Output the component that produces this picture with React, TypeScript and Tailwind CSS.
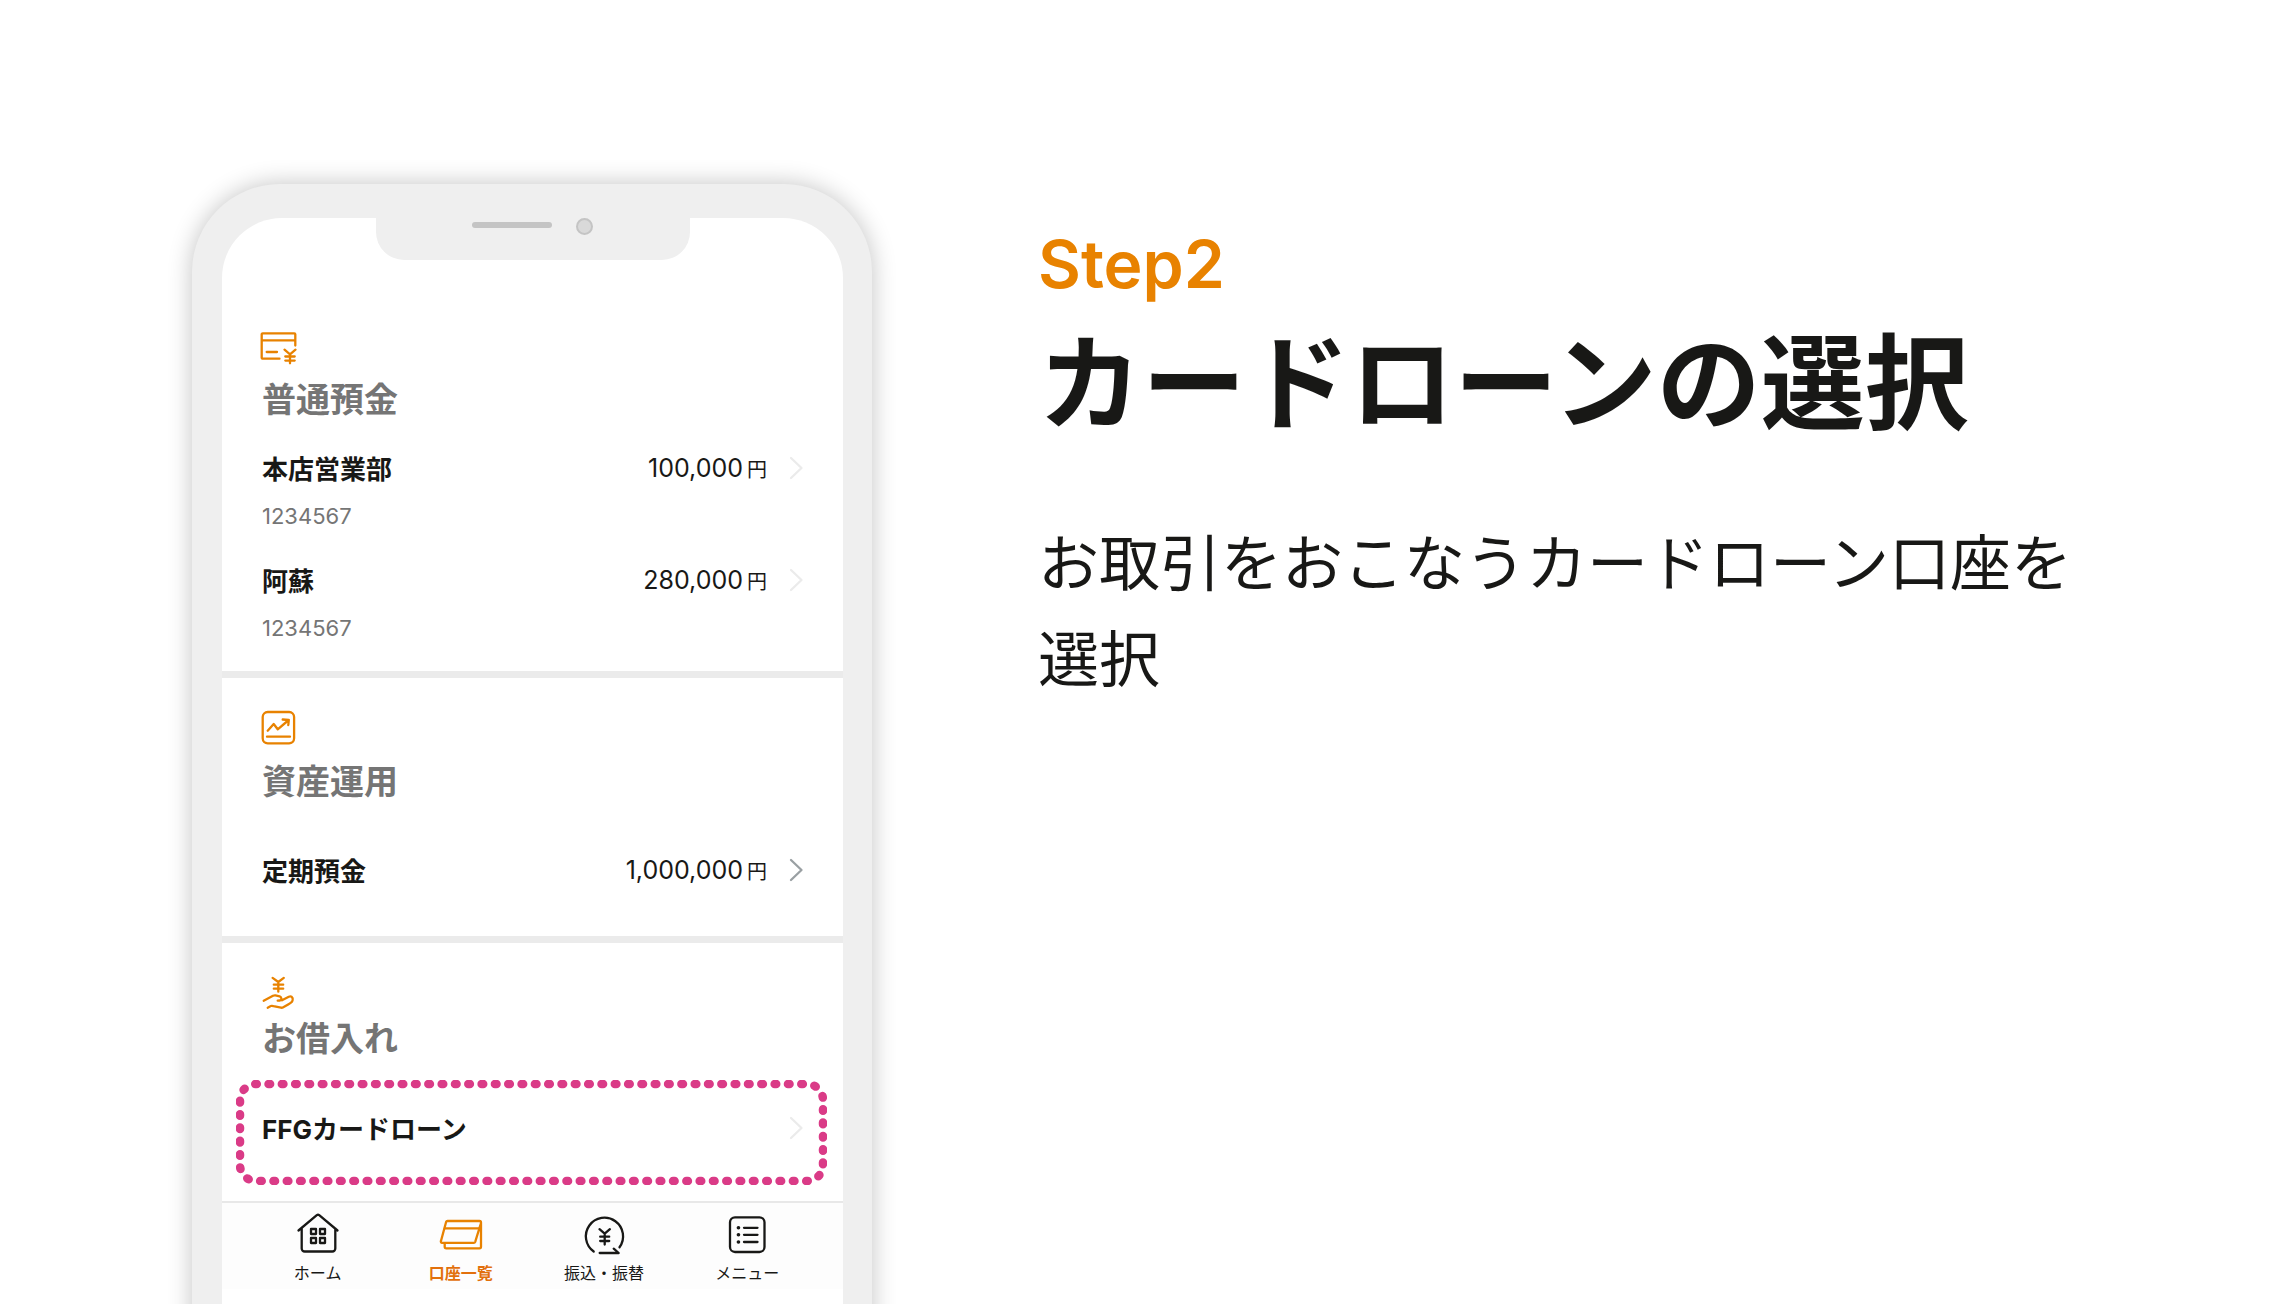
import type { ReactNode } from "react";

const jp = "font-['Inter','Noto_Sans_CJK_JP',sans-serif]";

type SvgProps = { className: string; viewBox: string; children: ReactNode };

function Svg({ className, viewBox, children }: SvgProps) {
  return (
    <svg
      className={`overflow-visible ${className}`}
      viewBox={viewBox}
      fill="none"
      stroke="currentColor"
      strokeWidth="2.300"
      strokeLinecap="round"
      strokeLinejoin="round"
      aria-hidden="true"
    >
      {children}
    </svg>
  );
}

function CardYenIcon() {
  return (
    <Svg className="h-8 w-9" viewBox="0 0 36 32">
      <path d="M19.500 26.700H2.700a1 1 0 0 1-1-1V2.300a1 1 0 0 1 1-1h31.600a1 1 0 0 1 1 1V13.500M1.700 8.300h33.600M6.700 20h10.300" />
      <path d="M24.500 17.700L30 22.300l5.500-4.600M30 22.300v9M25.300 24.500h9.400M25.300 28.600h9.400" />
    </Svg>
  );
}

function ChartIcon() {
  return (
    <Svg className="size-9" viewBox="0 0 36 36">
      <rect x="2.700" y="2" width="31.400" height="31.300" rx="5" />
      <path d="M7.700 20.700l6-6.700 4 5.300L28.700 10M22.700 9.500l6.100.5-.5 5M7 26.700h23" />
    </Svg>
  );
}

function HandYenIcon() {
  return (
    <Svg className="h-8 w-9" viewBox="0 0 36 32">
      <path d="M12.600 2.900l5.700 4.100 5.500-4.100M18.300 7v9.700M13.800 9.700h9.400M13.800 13.700h9.400" />
      <path d="M3.700 25.700l9.300-4.900c.9-.4 1.600-.6 2.400-.4l4.300 1c1 .3 1.600 1.200 1.700 2.200.1 1-.5 1.700-1.400 1.900l-2.300.1M22 25.200l6.800-3.500c1.500-.6 3-.2 3.600 1 .6 1.300.2 3.700-1.100 4.700-2.400 1.900-5.800 3.700-8.400 5.100-.6.300-1.200.3-1.900.2l-7.500-1.600c-1.200-.3-1.900-.5-2.700 0l-3.100 1.600" />
    </Svg>
  );
}

function Chevron({ className }: { className: string }) {
  return (
    <Svg className={`h-6 w-3.5 shrink-0 ${className}`} viewBox="0 0 14 24">
      <path d="M2 2l10.500 10L2 22" />
    </Svg>
  );
}

type RowProps = { name: string; number?: string; amount?: string; chevron?: string };

function AccountRow({ name, number, amount, chevron = "text-[#ebebeb]" }: RowProps) {
  return (
    <a href="#account" className="block">
      <div className="flex h-10 items-center">
        <span className="flex-1 pt-0.5 text-[26px] font-bold">{name}</span>
        {amount && (
          <span className="mr-5.5 pt-0.5 text-[25px]">
            {amount}
            <span className="ml-1 text-xl">円</span>
          </span>
        )}
        <Chevron className={chevron} />
      </div>
      {number && <p className="mt-2 text-[22px] leading-10 text-[#757575]">{number}</p>}
    </a>
  );
}

function SectionTitle({ children }: { children: ReactNode }) {
  return <h2 className="text-[34px] leading-12 font-bold text-[#757575]">{children}</h2>;
}

function SectionIcon({ children }: { children: ReactNode }) {
  return <div className="-ml-0.5 flex text-[#e88200]">{children}</div>;
}

const tabs = [
  {
    label: "ホーム",
    icon: (
      <>
        <path d="M1.500 19.500L19.800 4.200a2 2 0 0 1 2.400 0L40.500 19.500M4.700 17.500v20a3 3 0 0 0 3 3h27.600a3 3 0 0 0 3-3v-20" />
        <path d="M14 18h5v5h-5zM23 18h5v5h-5zM14 27h5v5h-5zM23 27h5v5h-5z" />
      </>
    ),
  },
  {
    label: "口座一覧",
    active: true,
    icon: (
      <>
        <path d="M4.700 32.300v3.500a1.500 1.500 0 0 0 1.500 1.500h33.300a1.500 1.500 0 0 0 1.500-1.500V11.500a1.500 1.500 0 0 0-1.500-1.500H7.500a1.500 1.500 0 0 0-1.400 1L.9 30.200a1.200 1.200 0 0 0 1.100 1.600h31.800a1.500 1.500 0 0 0 1.400-1L40.700 13" />
        <path d="M4.800 17.300h34.200" />
      </>
    ),
  },
  {
    label: "振込・振替",
    icon: (
      <>
        <path d="M10.700 40.500A18.600 18.600 0 1 1 36.500 36.300" />
        <path d="M16.700 42h19l-5-4.300" />
        <path d="M16.500 18.200l5.200 4.500 5.200-4.500M21.700 22.700v10.800M17.200 25.700h9M17.200 30h9" />
      </>
    ),
  },
  {
    label: "メニュー",
    icon: (
      <>
        <rect x="4" y="6.300" width="34.500" height="34.700" rx="5" />
        <path d="M18 16.800h13.500M18 23.800h13.500M18 31h13.500" />
        <path d="M12.400 16.800h.1M12.400 23.800h.1M12.400 31h.1" strokeWidth="3.600" />
      </>
    ),
  },
];

function TabBar() {
  return (
    <nav className="grid grid-cols-4 border-t-2 border-[#e8e8e8] bg-[#fdfdfd] px-6 pt-2 pb-1">
      {tabs.map((tab) => (
        <a key={tab.label} href="#tab" className="flex flex-col items-center">
          <Svg className={tab.active ? "size-[42px] text-[#e88200]" : "size-[42px]"} viewBox="0 0 42 42">
            {tab.icon}
          </Svg>
          <span className={tab.active ? "mt-2 text-base font-bold text-[#e2700c]" : "mt-2 text-base"}>
            {tab.label}
          </span>
        </a>
      ))}
    </nav>
  );
}

function Phone() {
  return (
    <div className="-mb-10 flex w-[680px] shrink-0 flex-col rounded-t-[88px] bg-[#efefef] pt-[34px] pr-[29px] pl-[30px] shadow-[0_0_24px_rgba(0,0,0,0.24)]">
      <div className="relative flex-1 overflow-hidden rounded-t-[60px] bg-white">
        <div className="absolute inset-x-0 top-0 mx-auto flex h-[42px] w-[314px] items-start rounded-b-[28px] bg-[#efefef] pl-24">
          <span className="mt-1 h-1.5 w-20 rounded-full bg-[#c4c4c4]" />
          <span className="ml-6 size-[17px] rounded-full border-2 border-[#c4c4c4] bg-[#d9d9d9]" />
        </div>

        <main>
          <section className="px-10 pt-[114px] pb-[23px]">
            <SectionIcon>
              <CardYenIcon />
            </SectionIcon>
            <div className="mt-3">
              <SectionTitle>普通預金</SectionTitle>
            </div>
            <div className="mt-6 space-y-6">
              <AccountRow name="本店営業部" number="1234567" amount="100,000" />
              <AccountRow name="阿蘇" number="1234567" amount="280,000" />
            </div>
          </section>

          <section className="border-t-[7px] border-[#ebebeb] px-10 pt-8 pb-[46px]">
            <SectionIcon>
              <ChartIcon />
            </SectionIcon>
            <div className="mt-3 mb-11">
              <SectionTitle>資産運用</SectionTitle>
            </div>
            <AccountRow name="定期預金" amount="1,000,000" chevron="text-[#9aa0a3]" />
          </section>

          <section className="border-t-[7px] border-[#ebebeb] pt-8 pr-4 pb-4 pl-3.5">
            <div className="px-[26px]">
              <SectionIcon>
                <HandYenIcon />
              </SectionIcon>
              <div className="mt-2">
                <SectionTitle>お借入れ</SectionTitle>
              </div>
            </div>
            <div className="relative mt-[17px] pt-7 pr-6 pb-[37px] pl-[26px]">
              <AccountRow name="FFGカードローン" />
              <svg className="pointer-events-none absolute inset-0 h-full w-full" fill="none" aria-hidden="true">
                <rect
                  className="h-[calc(100%-8px)] w-[calc(100%-8px)]"
                  x="4"
                  y="4"
                  rx="16"
                  pathLength="1000"
                  stroke="#da3b87"
                  strokeWidth="8.500"
                  strokeLinecap="round"
                  strokeDasharray="1.200 8.800"
                  strokeDashoffset="0.600"
                />
              </svg>
            </div>
          </section>
        </main>

        <TabBar />
      </div>
    </div>
  );
}

export default function App() {
  return (
    <div className={`flex min-h-screen overflow-hidden bg-white pt-46 pl-48 text-[#181816] ${jp}`}>
      <Phone />
      <div className="ml-[166px] pt-10">
        <p className="text-[66px] leading-20 font-semibold text-[#e88200]">Step2</p>
        <h1 className="text-[104px] leading-40 font-bold">カードローンの選択</h1>
        <p className="mt-13 max-w-[1060px] text-[61px] leading-24">お取引をおこなうカードローン口座を選択</p>
      </div>
    </div>
  );
}
